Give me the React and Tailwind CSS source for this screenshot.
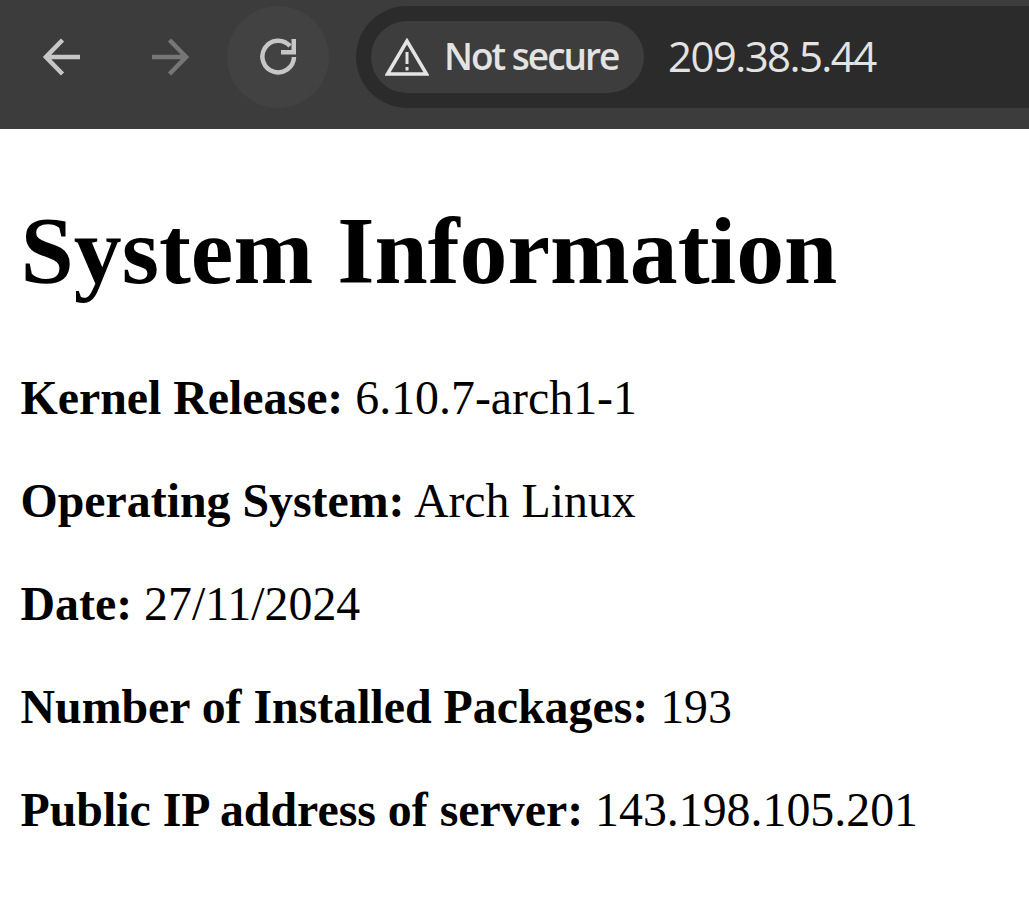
import React from "react";

function TopBar() {
  return (
    <div className="h-[129px] bg-[#3c3c3c] flex items-center pl-[11px] pb-[15px] overflow-hidden">
      <button className="w-[102px] h-[102px] flex items-center justify-center">
        <svg width="38" height="38" viewBox="0 0 38 38" fill="none" stroke="#c7c7c7" strokeWidth="4.500">
          <path d="M37 19H4M19.500 2 3 19l16.500 17" />
        </svg>
      </button>
      <button className="w-[102px] h-[102px] ml-[6px] flex items-center justify-center">
        <svg width="38" height="38" viewBox="0 0 38 38" fill="none" stroke="#767676" strokeWidth="4.500">
          <path d="M1 19h33M18.500 2 35 19 18.500 36" />
        </svg>
      </button>
      <button className="w-[102px] h-[102px] ml-[6px] rounded-full bg-[#424242] flex items-center justify-center">
        <svg width="38" height="38" viewBox="0 0 38 38" fill="none" stroke="#c7c7c7" strokeWidth="4.500">
          <path d="M31 8A15.800 15.800 0 1 0 35 19" />
          <path d="M37 1v15.500H22v-4.500h10.500V1z" fill="#c7c7c7" stroke="none" />
        </svg>
      </button>
      <div className="ml-[27px] flex-1 h-[102px] bg-[#2b2b2b] rounded-l-[51px] flex items-center pl-[15px]">
        <div className="w-[273px] h-[72px] rounded-[36px] bg-[#3d3d3d] flex items-center pl-[14px]">
          <svg width="44" height="38" viewBox="0 0 44 38" fill="none">
            <path d="M22 3 2.500 36h39z" stroke="#e3e3e3" strokeWidth="3.500" />
            <path d="M22 14v12M22 29v3.500" stroke="#e3e3e3" strokeWidth="3" />
          </svg>
          <span className="ml-[15px] pb-[3px] text-[37px] font-semibold leading-none text-[#e3e3e3] font-['Open_Sans',sans-serif] tracking-[-2px]">
            Not secure
          </span>
        </div>
        <span className="ml-[24px] pb-[3px] text-[42px] leading-none text-[#e3e3e3] font-['Open_Sans',sans-serif] tracking-[-1.6px]">
          209.38.5.44
        </span>
      </div>
    </div>
  );
}

const rows = [
  ["Kernel Release:", "6.10.7-arch1-1"],
  ["Operating System:", "Arch Linux"],
  ["Date:", "27/11/2024"],
  ["Number of Installed Packages:", "193"],
  ["Public IP address of server:", "143.198.105.201"],
];

export default function App() {
  return (
    <div className="w-[1029px] h-[924px] overflow-hidden bg-white text-black font-['Liberation_Serif',serif]">
      <TopBar />
      <div className="pl-[20.5px]">
        <h1 className="text-[95.8px] font-bold leading-[110px] mt-[67px] mb-[64px]">System Information</h1>
        {rows.map(([label, value]) => (
          <p key={label} className="text-[47.85px] leading-[55px] mb-[48px]">
            <strong className="font-bold">{label}</strong> {value}
          </p>
        ))}
      </div>
    </div>
  );
}
